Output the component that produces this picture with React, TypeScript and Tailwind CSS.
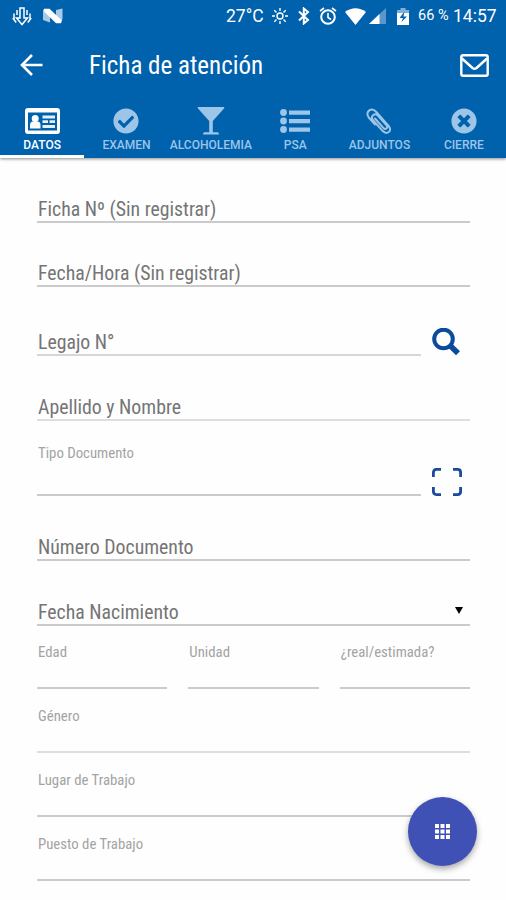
import React from 'react';
import clsx from 'clsx';
import { FaCheckCircle, FaTimesCircle } from 'react-icons/fa';

const IdCardIcon = () => (
  <svg className="w-[35px] h-[26px]" viewBox="0 0 35 26">
    <rect width="35" height="26" rx="3" fill="#fff" />
    <rect x="3" y="4.5" width="29" height="18" fill="#0061ad" />
    <circle cx="10.2" cy="10.500" r="3.500" fill="#fff" />
    <path d="M5 20.500v-3.5q0-3.500 3-3.500h4.500q3 0 3 3.500v3.500z" fill="#fff" />
    <path d="M17.500 9H30M17.500 13.700H23M24.500 13.700H30M17.500 18.500H30" stroke="#e6f0fa" strokeWidth="2.800" />
  </svg>
);

const GlassIcon = () => (
  <svg className="w-[28px] h-[28px]" viewBox="0 0 28 28" fill="currentColor">
    <path d="M1 0h26q.8.600 0 1.500L15.800 14v11.300h5q1.200.4 1.200 2.200H6q0-1.800 1.200-2.200h5V14L1 1.500Q.2.600 1 0z" />
  </svg>
);

const ListIcon = () => (
  <svg className="w-[30px] h-[24px]" viewBox="0 0 30 24" fill="currentColor">
    <circle cx="3.500" cy="3.500" r="3.400" />
    <circle cx="3.500" cy="12" r="3.400" />
    <circle cx="3.500" cy="20.500" r="3.400" />
    <path d="M9 1.400h21v4.300H9zM9 9.900h21v4.300H9zM9 18.400h21v4.300H9z" />
  </svg>
);

const ClipIcon = () => (
  <svg className="w-[26px] h-[27px]" viewBox="0 0 26 27" fill="none" stroke="currentColor" strokeWidth="2" strokeLinecap="round">
    <path d="M9 10.500l8.300 9.300c2.400 2.600 5.400-.2 3.100-2.800L12.300 8C8.700 4 3.600 8.200 7.300 12.500l9.200 10.300c4.300 4.600 10.200.3 6.300-4.600L10.300 4C5.300-1.500-1.500 4 2.800 9.500L9 16.500" />
  </svg>
);

const SearchIcon = () => (
  <svg className="w-[28px] h-[28px]" viewBox="0 0 28 28" fill="none" stroke="#0b4a9c">
    <circle cx="11.500" cy="11" r="9.300" strokeWidth="4" />
    <path d="M17.800 17.300l8.200 8" strokeWidth="5.600" />
  </svg>
);

const ScanIcon = () => (
  <svg className="w-[30px] h-[28px]" viewBox="0 0 30 28" fill="none" stroke="#1b4a9d" strokeWidth="2.800">
    <path d="M1.400 9V4.400q0-3 3-3H9M21 1.400h4.600q3 0 3 3V9M28.600 19v4.600q0 3-3 3H21M9 26.600H4.400q-3 0-3-3V19" />
  </svg>
);

const TABS = [
  { label: 'DATOS', icon: <IdCardIcon /> },
  { label: 'EXAMEN', icon: <FaCheckCircle className="w-[26px] h-[26px]" /> },
  { label: 'ALCOHOLEMIA', icon: <GlassIcon /> },
  { label: 'PSA', icon: <ListIcon /> },
  { label: 'ADJUNTOS', icon: <ClipIcon /> },
  { label: 'CIERRE', icon: <FaTimesCircle className="w-[26px] h-[26px]" /> },
];

const StatusBar = () => (
  <div className="h-8 flex items-center justify-between pl-3 pr-[9px] text-white">
    <div className="flex items-center gap-[11px]">
      <svg className="w-[20px] h-[19px]" viewBox="0 0 20 19" fill="none" stroke="#fff" strokeWidth="1.500">
        <path d="M8 1h4v10h3.500L10 17.500 4.500 11H8z" />
        <path d="M5 3v5M2 6.500v6M.8 11l3.400 4.500M15 3v5M18 6.500v6M19.200 11l-3.400 4.500" />
      </svg>
      <svg className="w-[20px] h-[16px]" viewBox="0 0 20 16">
        <path d="M0 1.500L7 4v10.500L0 12zM13 2l6.500-1.500v11L13 14z" fill="#a9c9e8" />
        <path d="M1 .8h5.500L19 12.500l-1 2.700h-5L1 3.500z" fill="#fff" />
      </svg>
    </div>
    <div className="flex items-center">
      <span className="text-[17.500px] leading-6 whitespace-nowrap w-[37px]">27°C</span>
      <svg className="w-4 h-4 ml-[9px]" viewBox="0 0 16 16" fill="none" stroke="#fff" strokeWidth="1.400">
        <circle cx="8" cy="8" r="3" />
        <path d="M8 0v3M8 13v3M0 8h3M13 8h3M2.300 2.300l2.200 2.200M11.500 11.500l2.200 2.200M2.300 13.700l2.200-2.200M11.500 4.500l2.200-2.200" />
      </svg>
      <svg className="w-[12px] h-[18px] ml-[10px]" viewBox="0 0 12 18" fill="none" stroke="#fff" strokeWidth="2">
        <path d="M1 4.500l9 8.500-4.200 3.500v-15L10 5 1 13.500" />
      </svg>
      <svg className="w-[18px] h-[18px] ml-[9px]" viewBox="0 0 18 18" fill="none" stroke="#fff" strokeWidth="2">
        <circle cx="9" cy="10" r="6.800" />
        <path d="M9 6v4.500l3 2M1 4l4-3M17 4l-4-3" strokeWidth="1.600" />
      </svg>
      <svg className="w-[21px] h-[17px] ml-[8px]" viewBox="0 0 21 17">
        <path d="M0 4Q10.500-3.500 21 4L10.500 17z" fill="#fff" />
      </svg>
      <svg className="w-[17px] h-[16px] ml-[3px]" viewBox="0 0 17 16">
        <path d="M17 0v16H0z" fill="#5b96cc" />
        <path d="M10.500 6.100V16H0z" fill="#fff" />
      </svg>
      <svg className="w-[12px] h-[17px] ml-[11px]" viewBox="0 0 12 17">
        <path d="M3.500 0h5v2H12v5H0V2h3.500z" fill="#7fb0dc" />
        <path d="M0 5h12v12H0z" fill="#fff" />
        <path d="M7.500 3.500L2.500 10H6l-1.500 4L10 8.500H6.500z" fill="#0061ad" />
      </svg>
      <span className="text-[14.500px] leading-6 whitespace-nowrap ml-[9px] w-[31px]">66 %</span>
      <span className="text-[17.500px] leading-6 whitespace-nowrap ml-1 w-[44px]">14:57</span>
    </div>
  </div>
);

const AppBar = () => (
  <div className="h-[66px] flex items-center pl-5 pr-[17px] text-white">
    <svg className="w-[23px] h-[22px]" viewBox="0 0 23 22" fill="none" stroke="#fff" strokeWidth="2.600">
      <path d="M12 1L2 11l10 10M2 11h20.500" />
    </svg>
    <h1 className="ml-[46px] flex-1 pt-px text-[25px] leading-8 font-normal whitespace-nowrap [font-stretch:75%]">Ficha de atención</h1>
    <svg className="w-[29px] h-[23px]" viewBox="0 0 29 23" fill="none" stroke="#fff" strokeWidth="2.400">
      <rect x="1.300" y="1.300" width="26.400" height="20.400" rx="1.800" />
      <path d="M2 4.500l10.500 9.500q2 1.600 4 0L27 4.500" />
    </svg>
  </div>
);

const Tabs = () => (
  <div className="h-[60px] grid grid-cols-6">
    {TABS.map((tab, idx) => (
      <div
        key={tab.label}
        className={clsx(
          'flex flex-col items-center border-b-[3px]',
          idx === 0 ? 'text-white border-white' : 'text-[#9cc5e8] border-transparent',
        )}
      >
        <div className="h-[28px] mt-[9px] flex items-center justify-center">{tab.icon}</div>
        <span className="text-[12px] leading-4 mt-[2px] font-medium whitespace-nowrap">{tab.label}</span>
      </div>
    ))}
  </div>
);

type FieldProps = { label: string; className: string; line?: string; children?: React.ReactNode };

// Empty field: the label rests on the underline
const Field = ({ label, className, line = 'border-[#cbcbcb]', children }: FieldProps) => (
  <div className={clsx('flex items-end justify-between border-b-2', line, className)}>
    <span className="relative top-px pl-px text-[19.800px] leading-6 text-[#757575] whitespace-nowrap [font-stretch:75%]">{label}</span>
    {children}
  </div>
);

// Select field: the label floats above the underline
const FloatField = ({ label, className, line = 'border-[#cbcbcb]' }: FieldProps) => (
  <div className={clsx('flex items-end border-b-2', line, className)}>
    <span className="pl-px text-[14.800px] leading-[18px] text-[#a3a3a3] whitespace-nowrap [font-stretch:75%]">{label}</span>
  </div>
);

const App: React.FC = () => {
  return (
    <div className="w-[506px] h-[900px] relative overflow-hidden bg-[#fefefe] font-['Roboto',sans-serif]">
      <header className="bg-[#0061ad] shadow-[0_1px_3px_rgba(0,0,0,0.45)]">
        <StatusBar />
        <AppBar />
        <Tabs />
      </header>

      <main className="pl-[37px] pr-9 pt-px">
        <Field label="Ficha Nº (Sin registrar)" className="h-[64px]" />
        <Field label="Fecha/Hora (Sin registrar)" className="h-[64px]" />
        <div className="flex items-end">
          <Field label="Legajo N°" className="h-[69px] w-[384px]" line="border-[#d6d6d6]" />
          <div className="ml-[11px]"><SearchIcon /></div>
        </div>
        <Field label="Apellido y Nombre" className="h-[65px]" line="border-[#dedede]" />
        <div className="flex items-end">
          <FloatField label="Tipo Documento" className="h-[75px] w-[384px] pb-[32px]" />
          <div className="ml-[11px]"><ScanIcon /></div>
        </div>
        <Field label="Número Documento" className="h-[65px]" />
        <Field label="Fecha Nacimiento" className="h-[65px]">
          <svg className="w-[8px] h-[7px] mr-[7px] mb-[10px]" viewBox="0 0 8 7">
            <path d="M0 0h8L4 7z" fill="#000" />
          </svg>
        </Field>
        <div className="grid grid-cols-3 gap-[21px]">
          <FloatField label="Edad" className="h-[63px] pb-[26px]" />
          <FloatField label="Unidad" className="h-[63px] pb-[26px]" />
          <FloatField label="¿real/estimada?" className="h-[63px] pb-[26px]" />
        </div>
        <FloatField label="Género" className="h-[64px] pb-[26px]" line="border-[#dedede]" />
        <FloatField label="Lugar de Trabajo" className="h-[64px] pb-[26px]" />
        <FloatField label="Puesto de Trabajo" className="h-[64px] pb-[26px]" />
      </main>

      <button className="absolute left-[408px] top-[797px] w-[69px] h-[69px] rounded-full bg-[#3f51b5] flex items-center justify-center shadow-[0_3px_6px_rgba(0,0,0,0.35)]">
        <svg className="w-[15px] h-[15px]" viewBox="0 0 15 15" fill="#fff">
          <path d="M0 0h4v4H0zM5.500 0h4v4h-4zM11 0h4v4h-4zM0 5.500h4v4H0zM5.500 5.500h4v4h-4zM11 5.500h4v4h-4zM0 11h4v4H0zM5.500 11h4v4h-4zM11 11h4v4h-4z" />
        </svg>
      </button>
    </div>
  );
};

export default App;
